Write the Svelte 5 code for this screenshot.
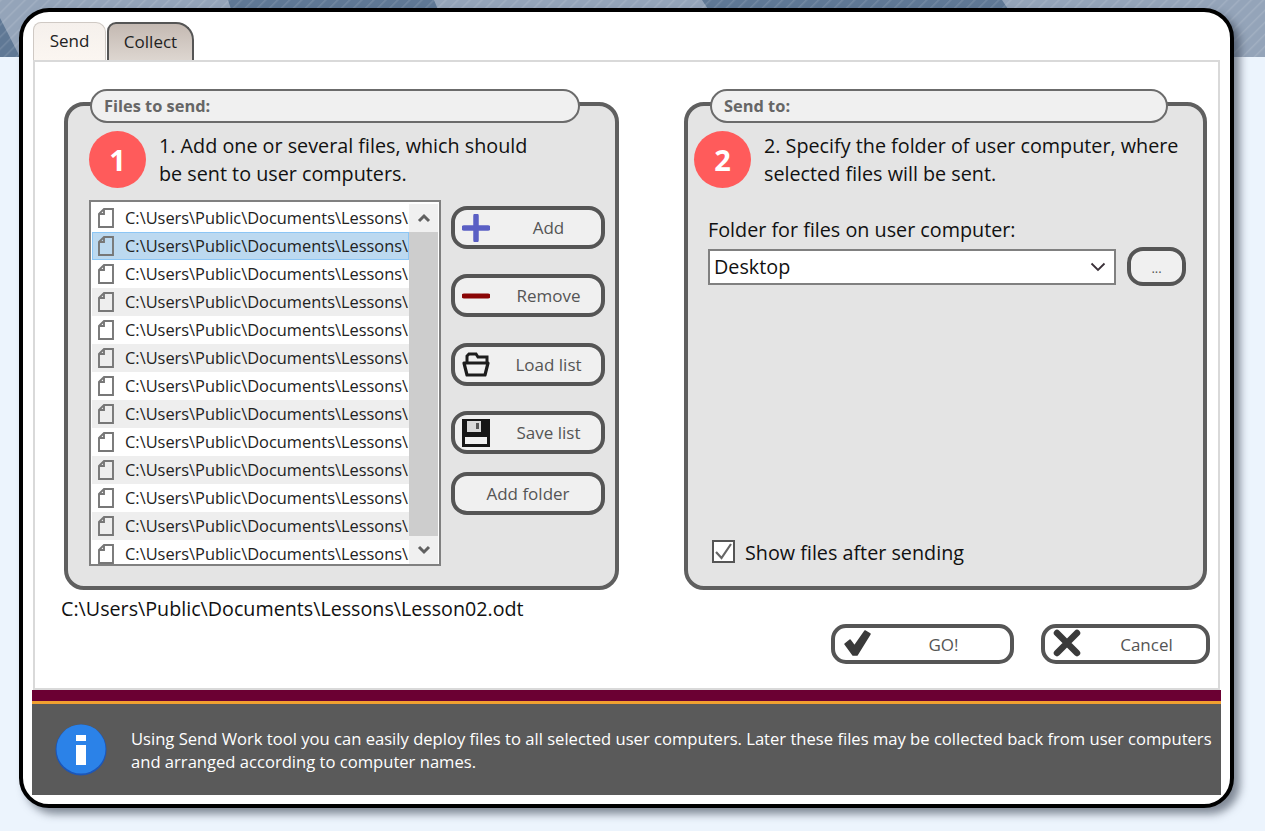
<script>
  const lessons = Array.from({ length: 13 }, (_, i) => {
    const n = String(i + 1).padStart(2, '0')
    return `C:\\Users\\Public\\Documents\\Lessons\\Lesson${n}.odt`
  })
  let selected = $state(1)
  let showFiles = $state(true)
</script>

<div class="page">
  <!-- wallpaper strip behind the dialog -->
  <svg class="wall" width="1265" height="57" viewBox="0 0 1265 57" aria-hidden="true">
    <defs>
      <pattern id="stripes" width="8.500" height="8.500" patternUnits="userSpaceOnUse" patternTransform="rotate(45)">
        <rect width="1.500" height="8.500" fill="#fff" fill-opacity="0.12" />
      </pattern>
    </defs>
    <rect width="1265" height="57" fill="#94a4b9" />
    <path d="M228 0h206l5 12H232zM702 0h300l8 12H710zM0 18l20 39H0z" fill="#5f7895" />
    <rect width="1265" height="57" fill="url(#stripes)" />
  </svg>

  <div class="window">
    <div class="tabs">
      <button class="tab active">Send</button>
      <button class="tab">Collect</button>
    </div>

    <div class="panel">
      <div class="groups">
        <section class="group left">
          <div class="legend">Files to send:</div>
          <div class="step">
            <span class="num">1</span>
            <p>1. Add one or several files, which should<br />be sent to user computers.</p>
          </div>
          <div class="files">
            <div class="list">
              <ul>
                {#each lessons as file, i}
                  <li class:sel={i === selected} class:alt={i % 2 === 1}>
                    <svg width="16" height="20" viewBox="0 0 16 20">
                      <path d="M6 1h9v18H1V6z M6 1v5H1" fill="none" stroke="#777" stroke-width="1.900" />
                    </svg>
                    <span>{file}</span>
                  </li>
                {/each}
              </ul>
              <div class="scroll">
                <div class="arrow">
                  <svg width="14" height="10" viewBox="0 0 14 10"><path d="M2 8l5-5 5 5" fill="none" stroke="#606060" stroke-width="3" /></svg>
                </div>
                <div class="thumb"></div>
                <div class="arrow">
                  <svg width="14" height="10" viewBox="0 0 14 10"><path d="M2 2l5 5 5-5" fill="none" stroke="#606060" stroke-width="3" /></svg>
                </div>
              </div>
            </div>
            <div class="side">
              <button class="btn icon">
                <svg width="28" height="28" viewBox="0 0 28 28"><path d="M14 2v24M2 14h24" stroke="#5a5fc4" stroke-width="5.500" stroke-linecap="round" /></svg>
                <span>Add</span>
              </button>
              <button class="btn icon">
                <svg width="28" height="28" viewBox="0 0 28 28"><path d="M2 14h24" stroke="#8a0505" stroke-width="5" stroke-linecap="round" /></svg>
                <span>Remove</span>
              </button>
              <button class="btn icon third">
                <svg width="28" height="28" viewBox="0 0 28 28">
                  <path d="M5 11V5l2-2h7l2 3h9v8" fill="none" stroke="#1c1c1c" stroke-width="3" />
                  <path d="M2 12h24l-3 12H5z" fill="#f0f0f0" stroke="#1c1c1c" stroke-width="3.200" stroke-linejoin="round" />
                </svg>
                <span>Load list</span>
              </button>
              <button class="btn icon">
                <svg width="28" height="28" viewBox="0 0 28 28">
                  <path d="M0 0h28v28H0z" fill="#161616" />
                  <path d="M5 2h14v11H5z" fill="#d8d8d8" />
                  <path d="M14 4h3v6h-3z" fill="#555" />
                  <path d="M3 18h22v7H3z" fill="#f0f0f0" />
                </svg>
                <span>Save list</span>
              </button>
              <button class="btn last"><span>Add folder</span></button>
            </div>
          </div>
        </section>

        <section class="group right">
          <div class="legend">Send to:</div>
          <div class="step">
            <span class="num">2</span>
            <p>2. Specify the folder of user computer, where<br />selected files will be sent.</p>
          </div>
          <div class="dest">
            <div class="dest-label">Folder for files on user computer:</div>
            <div class="dest-row">
              <div class="combo">
                <span>Desktop</span>
                <svg width="16" height="10" viewBox="0 0 16 10"><path d="M1.500 1.500L8 8l6.500-6.500" fill="none" stroke="#3a3038" stroke-width="1.800" /></svg>
              </div>
              <button class="btn browse"><span>...</span></button>
            </div>
          </div>
          <label class="check">
            <input type="checkbox" bind:checked={showFiles} />
            <span class="box">
              {#if showFiles}
                <svg width="19" height="19" viewBox="0 0 19 19"><path d="M2 10l5.500 6L17 2" fill="none" stroke="#666" stroke-width="2.200" /></svg>
              {/if}
            </span>
            <span class="check-text">Show files after sending</span>
          </label>
        </section>
      </div>

      <div class="path">{lessons[selected]}</div>

      <div class="actions">
        <button class="btn wide go">
          <svg width="30" height="30" viewBox="0 0 30 30"><path d="M2 15l5-4 4.500 6L22 2l5 3-13 21h-4z" fill="#3a3a3a" stroke="#3a3a3a" stroke-width="1.500" stroke-linejoin="round" /></svg>
          <span>GO!</span>
        </button>
        <button class="btn wide cancel">
          <svg width="30" height="30" viewBox="0 0 30 30"><path d="M4 4l20 20M24 4L4 24" stroke="#3a3a3a" stroke-width="6.500" stroke-linecap="round" /></svg>
          <span>Cancel</span>
        </button>
      </div>
    </div>

    <div class="footer">
      <svg class="info" width="52" height="52" viewBox="0 0 52 52">
        <circle cx="26" cy="26" r="25.500" fill="#1c56b8" />
        <circle cx="26" cy="25" r="24.500" fill="#2b82e8" />
        <rect x="21" y="11" width="10" height="6" fill="#fff" />
        <rect x="21" y="21" width="10" height="20" fill="#fff" />
      </svg>
      <p>Using Send Work tool you can easily deploy files to all selected user computers. Later these files may be collected back from user computers<br />and arranged according to computer names.</p>
    </div>
  </div>
</div>

<style>
  :global(body) {
    margin: 0;
    background: #ecf4fd;
  }

  .page {
    position: relative;
    height: 831px;
    box-sizing: border-box;
    padding: 8px 0 0 19px;
    overflow: hidden;
    font-family: "Open Sans", "Noto Sans", sans-serif;
  }

  .wall {
    position: absolute;
    top: 0;
    left: 0;
  }

  .window {
    position: relative;
    box-sizing: border-box;
    width: 1215px;
    height: 800px;
    padding: 10px 10px 9px 10px;
    background: #fff;
    border: 4px solid #000;
    border-radius: 30px;
    box-shadow: 6px 6px 8px rgba(40, 50, 65, 0.55);
  }

  button {
    font-family: inherit;
    margin: 0;
    padding: 0;
  }

  .tabs {
    display: flex;
    height: 38px;
    gap: 1px;
  }

  .tab {
    width: 87px;
    padding-bottom: 2px;
    border: 2px solid #555;
    border-bottom: 0;
    border-radius: 9px 18px 0 0;
    background: linear-gradient(#c4b9b2, #ddd6d0);
    color: #222;
    font-size: 17px;
  }

  .tab.active {
    width: 73px;
    border: 1px solid #cfc9c4;
    border-bottom: 0;
    border-radius: 8px 10px 0 0;
    background: linear-gradient(#f5f0ec, #fbf6f1);
  }

  .panel {
    height: 630px;
    box-sizing: border-box;
    padding: 27px 0 0 29px;
    border: 2px solid #d9d9d9;
  }

  .groups {
    display: flex;
    gap: 65px;
  }

  .group {
    box-sizing: border-box;
    height: 488px;
    margin-top: 13px;
    display: flex;
    flex-direction: column;
    background: #e4e4e4;
    border: 4px solid #5f5f5f;
    border-radius: 20px;
  }

  .group.left { width: 555px; }
  .group.right { width: 523px; }

  .legend {
    box-sizing: border-box;
    height: 34px;
    margin: -17px 0 0 22px;
    padding-left: 12px;
    line-height: 29px;
    background: #f0f0f0;
    border: 2px solid #6b6b6b;
    border-radius: 17px;
    color: #666;
    font-size: 16.400px;
    font-weight: 700;
  }

  .left .legend { width: 490px; }
  .right .legend { width: 458px; }

  .step {
    display: flex;
    gap: 13px;
    align-items: center;
    height: 57px;
    margin-top: 8px;
    padding-left: 21px;
  }

  .right .step { padding-left: 6px; }

  .step p {
    margin: 0;
    font-size: 19.750px;
    line-height: 28px;
    color: #111;
    white-space: nowrap;
  }

  .num {
    flex: none;
    width: 57px;
    height: 57px;
    border-radius: 50%;
    background: #ff5b5b;
    color: #fff;
    font-size: 29px;
    font-weight: 700;
    line-height: 57px;
    text-align: center;
  }

  .files {
    display: flex;
    gap: 10px;
    margin: 12px 0 0 21px;
  }

  .list {
    box-sizing: border-box;
    width: 352px;
    height: 366px;
    padding: 2px 1px 0;
    display: flex;
    flex: none;
    overflow: hidden;
    background: #fff;
    border: 2px solid #808080;
  }

  ul {
    flex: 1;
    min-width: 0;
    margin: 0;
    padding: 0;
    list-style: none;
    overflow: hidden;
  }

  li {
    display: flex;
    align-items: center;
    gap: 11px;
    box-sizing: border-box;
    height: 28px;
    padding-left: 6px;
    color: #222;
    font-size: 16.400px;
    white-space: nowrap;
    overflow: hidden;
  }

  li span { padding-bottom: 2px; }

  li.alt { background: #eeeeee; }

  li.sel {
    padding-left: 5px;
    background: #bcd9f0;
    border: 1px solid #8cc6f5;
  }

  li svg { flex: none; margin-top: -1px; }

  .scroll {
    flex: none;
    width: 29px;
    display: flex;
    flex-direction: column;
    background: #f0f0f0;
  }

  .arrow {
    flex: none;
    height: 28px;
    display: flex;
    align-items: center;
    justify-content: center;
  }

  .thumb {
    flex: 1;
    background: #cdcdcd;
  }

  .side {
    display: flex;
    flex-direction: column;
    gap: 25px;
    margin-top: 6px;
  }

  .btn {
    box-sizing: border-box;
    display: flex;
    align-items: center;
    background: #f0f0f0;
    border: 4px solid #555;
    border-radius: 16px;
    color: #555;
    font-size: 17px;
  }

  .btn span {
    flex: 1;
    text-align: center;
  }

  .side .btn {
    width: 154px;
    height: 43px;
  }

  .btn.icon { padding: 0 14px 0 7px; }
  .btn.icon span { padding-left: 20px; }
  .btn.third { margin-top: 1px; }
  .btn.last { margin-top: -7px; }

  .dest { padding-left: 20px; }

  .dest-label {
    margin-top: 28px;
    font-size: 19.750px;
    line-height: 28px;
    color: #111;
  }

  .dest-row {
    display: flex;
    align-items: center;
    gap: 11px;
    margin-top: 3px;
  }

  .combo {
    box-sizing: border-box;
    width: 408px;
    height: 36px;
    display: flex;
    align-items: center;
    justify-content: space-between;
    padding: 0 8px 0 4px;
    background: #fff;
    border: 2px solid #808080;
    color: #111;
    font-size: 19.750px;
  }

  .browse {
    width: 59px;
    height: 39px;
    padding-top: 3px;
    font-size: 13px;
  }

  .check {
    display: flex;
    align-items: center;
    gap: 10px;
    margin: auto 0 20px 24px;
    font-size: 19.750px;
    color: #111;
  }

  .check input {
    position: absolute;
    opacity: 0;
  }

  .check-text { padding-top: 2px; }

  .box {
    box-sizing: border-box;
    width: 23px;
    height: 23px;
    display: flex;
    align-items: center;
    justify-content: center;
    background: #fff;
    border: 2px solid #555;
  }

  .path {
    margin: 5px 0 0 -3px;
    font-size: 19.700px;
    line-height: 27px;
    color: #111;
  }

  .actions {
    display: flex;
    justify-content: flex-end;
    gap: 27px;
    margin-top: 2px;
    padding-right: 8px;
  }

  .btn.wide {
    height: 40px;
    padding: 0 8px;
    background: #fff;
    border-radius: 15px;
  }

  .go { width: 183px; }
  .cancel { width: 169px; }
  .wide span { padding-left: 12px; }

  .footer {
    display: flex;
    align-items: center;
    gap: 24px;
    box-sizing: border-box;
    height: 105px;
    margin: 0 -1px 0 -1px;
    padding: 14px 0 0 23px;
    background: linear-gradient(#6b0033 11px, #f0a030 11px 14px, #5a5a5a 14px);
  }

  .info { flex: none; }

  .footer p {
    margin: 0;
    color: #fff;
    font-size: 16.600px;
    line-height: 23px;
    white-space: nowrap;
  }
</style>
